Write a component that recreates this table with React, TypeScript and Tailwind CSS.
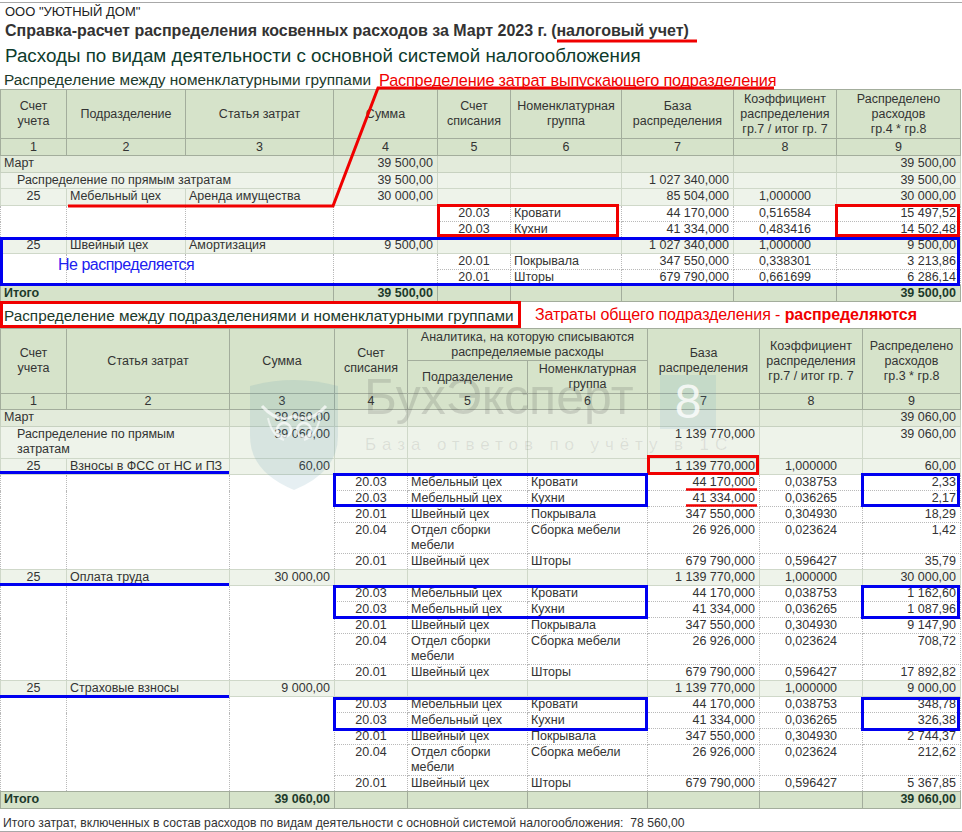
import React from 'react';

type K = 'h' | 'm' | 's' | 'd1' | 'd2' | 't';
type A = 'l' | 'c' | 'r';

const kindCls: Record<K, string> = {
  h: 'bg-[#d6e3ca] border border-[#a3ad9c] align-middle font-normal',
  m: 'bg-[#e3ebdb] border border-[#c7d1c0] align-top',
  s: 'bg-[#eef3ea] border border-[#cfd8c9] align-top',
  d1: 'bg-white border-x border-dotted border-[#b9b9b9] align-top',
  d2: 'bg-white border-x border-t border-b border-dotted border-[#b9b9b9] align-top',
  t: 'bg-[#d6e3ca] border border-[#a3ad9c] align-top font-bold text-[#1d3a2a]',
};

const alignCls: Record<A, string> = {
  l: 'text-left pl-[3px]',
  c: 'text-center',
  r: 'text-right pr-[4px]',
};

const C = ({ k, a, cs, rs, children, pl }: { k: K; a?: A; cs?: number; rs?: number; children?: React.ReactNode; pl?: boolean }) => {
  const al = a ?? (k === 'h' ? 'c' : 'l');
  return (
    <td colSpan={cs} rowSpan={rs} className={`${kindCls[k]} ${pl ? 'text-left pl-[16px]' : alignCls[al]} p-0 whitespace-nowrap`}>
      {children}
    </td>
  );
};

const T1W = [66, 119, 148, 104, 73, 111, 112, 103, 124];
const T2W = [66, 163, 105, 73, 120, 120, 112, 103, 98];

const Cols = ({ w }: { w: number[] }) => (
  <colgroup>
    {w.map((x, i) => (
      <col key={i} style={{ width: x }} />
    ))}
  </colgroup>
);

const t1Details = [
  { first: true, n: ['25', 'Мебельный цех', 'Аренда имущества', '30 000,00'], base: '85 504,000', k: '1,000000', v: '30 000,00' },
  { acc: '20.03', g: 'Кровати', base: '44 170,000', k: '0,516584', v: '15 497,52' },
  { acc: '20.03', g: 'Кухни', base: '41 334,000', k: '0,483416', v: '14 502,48' },
  { first: true, n: ['25', 'Швейный цех', 'Амортизация', '9 500,00'], base: '1 027 340,000', k: '1,000000', v: '9 500,00' },
  { acc: '20.01', g: 'Покрывала', base: '347 550,000', k: '0,338301', v: '3 213,86' },
  { acc: '20.01', g: 'Шторы', base: '679 790,000', k: '0,661699', v: '6 286,14' },
];

const t2Blocks = [
  { art: 'Взносы в ФСС от НС и ПЗ', sum: '60,00', d: ['2,33', '2,17', '18,29', '1,42', '35,79'] },
  { art: 'Оплата труда', sum: '30 000,00', d: ['1 162,60', '1 087,96', '9 147,90', '708,72', '17 892,82'] },
  { art: 'Страховые взносы', sum: '9 000,00', d: ['348,78', '326,38', '2 744,37', '212,62', '5 367,85'] },
];

const t2Rows = [
  { acc: '20.03', dep: 'Мебельный цех', g: 'Кровати', base: '44 170,000', k: '0,038753' },
  { acc: '20.03', dep: 'Мебельный цех', g: 'Кухни', base: '41 334,000', k: '0,036265' },
  { acc: '20.01', dep: 'Швейный цех', g: 'Покрывала', base: '347 550,000', k: '0,304930' },
  { acc: '20.04', dep: 'Отдел сборки мебели', g: 'Сборка мебели', base: '26 926,000', k: '0,023624', two: true },
  { acc: '20.01', dep: 'Швейный цех', g: 'Шторы', base: '679 790,000', k: '0,596427' },
];

function Table1() {
  return (
    <table className="w-[960px] table-fixed border-collapse text-[12.5px] leading-[15px] text-[#333]">
      <Cols w={T1W} />
      <tbody>
        <tr className="h-[49px]">
          <C k="h">Счет<br />учета</C>
          <C k="h">Подразделение</C>
          <C k="h">Статья затрат</C>
          <C k="h">Сумма</C>
          <C k="h">Счет<br />списания</C>
          <C k="h">Номенклатурная<br />группа</C>
          <C k="h">База<br />распределения</C>
          <C k="h">Коэффициент<br />распределения<br />гр.7 / итог гр. 7</C>
          <C k="h">Распределено<br />расходов<br />гр.4 * гр.8</C>
        </tr>
        <tr className="h-[17px]">
          {[1, 2, 3, 4, 5, 6, 7, 8, 9].map(n => (
            <C key={n} k="h">{n}</C>
          ))}
        </tr>
        <tr className="h-[17px]">
          <C k="m" cs={3}>Март</C>
          <C k="m" a="r">39 500,00</C>
          <C k="m" />
          <C k="m" />
          <C k="m" />
          <C k="m" />
          <C k="m" a="r">39 500,00</C>
        </tr>
        <tr className="h-[16px]">
          <C k="s" cs={3} pl>Распределение по прямым затратам</C>
          <C k="s" a="r">39 500,00</C>
          <C k="s" />
          <C k="s" />
          <C k="s" a="r">1 027 340,000</C>
          <C k="s" />
          <C k="s" a="r">39 500,00</C>
        </tr>
        {t1Details.map((r, i) =>
          r.first ? (
            <tr key={i} className={i === 0 ? 'h-[17px]' : 'h-[16px]'}>
              <C k="s" a="c">{r.n![0]}</C>
              <C k="s">{r.n![1]}</C>
              <C k="s">{r.n![2]}</C>
              <C k="s" a="r">{r.n![3]}</C>
              <C k="s" />
              <C k="s" />
              <C k="s" a="r">{r.base}</C>
              <C k="s" a="c">{r.k}</C>
              <C k="s" a="r">{r.v}</C>
            </tr>
          ) : (
            <tr key={i} className="h-[16px]">
              <C k="d1" />
              <C k="d1" />
              <C k="d1" />
              <C k="d1" />
              <C k="d2" a="c">{r.acc}</C>
              <C k="d2">{r.g}</C>
              <C k="d2" a="r">{r.base}</C>
              <C k="d2" a="c">{r.k}</C>
              <C k="d2" a="r">{r.v}</C>
            </tr>
          )
        )}
        <tr className="h-[16px]">
          <C k="t" cs={3}>Итого</C>
          <C k="t" a="r">39 500,00</C>
          <C k="t" />
          <C k="t" />
          <C k="t" />
          <C k="t" />
          <C k="t" a="r">39 500,00</C>
        </tr>
      </tbody>
    </table>
  );
}

function Table2() {
  return (
    <table className="w-[960px] table-fixed border-collapse text-[12.5px] leading-[15px] text-[#333]">
      <Cols w={T2W} />
      <tbody>
        <tr className="h-[32px]">
          <C k="h" rs={2}>Счет<br />учета</C>
          <C k="h" rs={2}>Статья затрат</C>
          <C k="h" rs={2}>Сумма</C>
          <C k="h" rs={2}>Счет<br />списания</C>
          <C k="h" cs={2}>Аналитика, на которую списываются<br />распределяемые расходы</C>
          <C k="h" rs={2}>База<br />распределения</C>
          <C k="h" rs={2}>Коэффициент<br />распределения<br />гр.7 / итог гр. 7</C>
          <C k="h" rs={2}>Распределено<br />расходов<br />гр.3 * гр.8</C>
        </tr>
        <tr className="h-[33px]">
          <C k="h">Подразделение</C>
          <C k="h">Номенклатурная<br />группа</C>
        </tr>
        <tr className="h-[16px]">
          {[1, 2, 3, 4, 5, 6, 7, 8, 9].map(n => (
            <C key={n} k="h">{n}</C>
          ))}
        </tr>
        <tr className="h-[17px]">
          <C k="m" cs={2}>Март</C>
          <C k="m" a="r">39 060,00</C>
          <C k="m" />
          <C k="m" />
          <C k="m" />
          <C k="m" />
          <C k="m" />
          <C k="m" a="r">39 060,00</C>
        </tr>
        <tr className="h-[32px]">
          <C k="s" cs={2} pl>Распределение по прямым<br />затратам</C>
          <C k="s" a="r">39 060,00</C>
          <C k="s" />
          <C k="s" />
          <C k="s" />
          <C k="s" a="r">1 139 770,000</C>
          <C k="s" />
          <C k="s" a="r">39 060,00</C>
        </tr>
        {t2Blocks.map((b, bi) => (
          <React.Fragment key={bi}>
            <tr className="h-[16px]">
              <C k="s" a="c">25</C>
              <C k="s">{b.art}</C>
              <C k="s" a="r">{b.sum}</C>
              <C k="s" />
              <C k="s" />
              <C k="s" />
              <C k="s" a="r">1 139 770,000</C>
              <C k="s" a="c">1,000000</C>
              <C k="s" a="r">{b.sum}</C>
            </tr>
            {t2Rows.map((r, ri) => (
              <tr key={ri} className={r.two ? 'h-[31px]' : 'h-[16px]'}>
                <C k="d1" />
                <C k="d1" />
                <C k="d1" />
                <C k="d2" a="c">{r.acc}</C>
                <C k="d2">{r.two ? <>Отдел сборки<br />мебели</> : r.dep}</C>
                <C k="d2">{r.g}</C>
                <C k="d2" a="r">{r.base}</C>
                <C k="d2" a="c">{r.k}</C>
                <C k="d2" a="r">{b.d[ri]}</C>
              </tr>
            ))}
          </React.Fragment>
        ))}
        <tr className="h-[17px]">
          <C k="t" cs={2}>Итого</C>
          <C k="t" a="r">39 060,00</C>
          <C k="t" />
          <C k="t" />
          <C k="t" />
          <C k="t" />
          <C k="t" />
          <C k="t" a="r">39 060,00</C>
        </tr>
      </tbody>
    </table>
  );
}

function Watermark() {
  return (
    <div className="pointer-events-none absolute inset-0 z-10">
      <svg className="absolute left-[248px] top-[378px]" width="92" height="112" viewBox="0 0 92 112">
        <path d="M2 8 Q46 -4 90 8 L90 58 Q90 94 46 112 Q2 94 2 58 Z" fill="rgba(90,150,170,0.15)" />
        <path d="M14 28 Q30 46 46 38 Q62 46 78 28" fill="none" stroke="rgba(255,255,255,0.7)" strokeWidth="3" />
        <circle cx="36" cy="52" r="7" fill="none" stroke="rgba(255,255,255,0.7)" strokeWidth="2.5" />
        <circle cx="56" cy="52" r="7" fill="none" stroke="rgba(255,255,255,0.7)" strokeWidth="2.5" />
        <path d="M20 40 Q24 58 36 62 M72 40 Q68 58 56 62" fill="none" stroke="rgba(255,255,255,0.6)" strokeWidth="2" />
      </svg>
      <div className="absolute left-[364px] top-[372px] text-[50px] leading-[50px] text-[rgba(80,80,80,0.18)]">БухЭксперт</div>
      <div className="absolute left-[660px] top-[375px] flex h-[54px] w-[56px] items-center justify-center bg-[rgba(100,165,190,0.14)] text-[48px] leading-[48px] text-[rgba(255,255,255,0.8)]">8</div>
      <div className="absolute left-[365px] top-[436px] text-[17px] leading-[17px] tracking-[5.9px] text-[rgba(80,80,80,0.12)]">База ответов по учёту в 1С</div>
    </div>
  );
}

function Marks() {
  const blue = '#0000f0';
  const red = '#f00000';
  const blocks = [0, 112, 224];
  return (
    <svg className="pointer-events-none absolute left-0 top-0 z-20" width="962" height="832" viewBox="0 0 962 832">
      <line x1="557" y1="41" x2="697" y2="41" stroke={red} strokeWidth="3" />
      <polyline points="774,88 378,88 333,206 68,206" fill="none" stroke={red} strokeWidth="3" />
      <rect x="438.5" y="205.5" width="179" height="30" fill="none" stroke={red} strokeWidth="3" />
      <rect x="836.5" y="205.5" width="122" height="30" fill="none" stroke={red} strokeWidth="3" />
      <rect x="1.5" y="238.5" width="957" height="46" fill="none" stroke={blue} strokeWidth="3" />
      <rect x="1.5" y="302.5" width="518" height="24" fill="none" stroke={red} strokeWidth="3" />
      <rect x="648.5" y="456.5" width="109" height="17" fill="none" stroke={red} strokeWidth="3" />
      <line x1="686" y1="489.5" x2="757" y2="489.5" stroke={red} strokeWidth="2.5" />
      <line x1="686" y1="505.5" x2="757" y2="505.5" stroke={red} strokeWidth="2.5" />
      {blocks.map(o => (
        <g key={o}>
          <line x1="0" y1={472.5 + o} x2="229" y2={472.5 + o} stroke={blue} strokeWidth="3" />
          <rect x="334.5" y={474.5 + o} width="312" height="31" fill="none" stroke={blue} strokeWidth="3" />
          <rect x="862.5" y={474.5 + o} width="96" height="31" fill="none" stroke={blue} strokeWidth="3" />
        </g>
      ))}
    </svg>
  );
}

export default function App() {
  return (
    <div className="relative h-[832px] w-[962px] overflow-hidden bg-white font-['Liberation_Sans',Arial,sans-serif] text-[#333]">
      <div className="mt-[2px] border-t border-[#a8a8a8]" />
      <div className="h-[17px] pl-[5px] text-[13px] leading-[17px] text-[#222]">ООО "УЮТНЫЙ ДОМ"</div>
      <div className="flex h-[21px] items-center pl-[5px] text-[16px] font-bold leading-[21px] text-[#333]">
        <span>Справка-расчет распределения косвенных расходов за Март 2023 г.</span>
        <span className="ml-[4px]">(налоговый учет)</span>
      </div>
      <div className="h-[29px] pl-[5px] text-[18.8px] leading-[29px] text-[#0e3b2c]">
        Расходы по видам деятельности с основной системой налогообложения
      </div>
      <div className="flex h-[19px] items-end leading-[18px]">
        <span className="pl-[4px] text-[15.4px] text-[#1b3a2a]">Распределение между номенклатурными группами</span>
        <span className="ml-[8px] text-[16.3px] tracking-[-0.2px] text-[#f00000]">Распределение затрат выпускающего подразделения</span>
      </div>
      <Table1 />
      <div className="flex h-[26px] items-center leading-[20px]">
        <span className="w-[535px] pl-[4px] pt-[1px] text-[15.3px] text-[#1b3a2a]">
          Распределение между подразделениями и номенклатурными группами
        </span>
        <span className="text-[16px] tracking-[-0.1px] text-[#f00000]">
          Затраты общего подразделения - <b>распределяются</b>
        </span>
      </div>
      <Table2 />
      <div className="h-[23px] border-b border-[#a8a8a8] pl-[3px] pt-[7px] text-[12.2px] leading-[15px] text-[#333]">
        Итого затрат, включенных в состав расходов по видам деятельности с основной системой налогообложения:&nbsp; 78 560,00
      </div>
      <Watermark />
      <div className="pointer-events-none absolute left-[58px] top-[255px] z-20 text-[16px] leading-[20px] tracking-[-0.5px] text-[#2020f0]">
        Не распределяется
      </div>
      <Marks />
    </div>
  );
}
